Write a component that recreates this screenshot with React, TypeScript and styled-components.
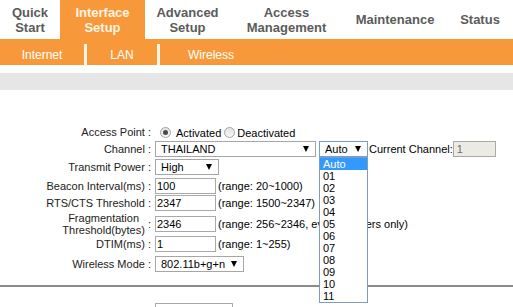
import React from "react";
import styled, { createGlobalStyle } from "styled-components";

const ORANGE = "#f7993b";

const GlobalStyle = createGlobalStyle`
  html, body { margin: 0; padding: 0; background: #fff; }
  body { font-family: "Liberation Sans", Arial, sans-serif; }
`;

const Page = styled.div`
  width: 513px;
  height: 307px;
  overflow: hidden;
  position: relative;
`;

const TopNav = styled.nav`
  display: flex;
  height: 39px;
`;

const Tab = styled.div<{ $w: number; $active?: boolean }>`
  flex: none;
  width: ${(p) => p.$w}px;
  display: flex;
  align-items: center;
  justify-content: center;
  text-align: center;
  font-size: 13px;
  line-height: 15px;
  font-weight: bold;
  color: ${(p) => (p.$active ? "#fff4e4" : "#5b5b5b")};
  background: ${(p) => (p.$active ? ORANGE : "transparent")};
`;

const SubNav = styled.div`
  display: flex;
  align-items: flex-end;
  height: 26px;
  background: ${ORANGE};
`;

const SubItem = styled.div<{ $w: number }>`
  flex: none;
  width: ${(p) => p.$w}px;
  height: 21px;
  display: flex;
  align-items: center;
  justify-content: center;
  color: #fff;
  font-size: 12px;
`;

const SubSep = styled.div`
  flex: none;
  width: 3px;
  height: 21px;
  background: #fff6e6;
`;

const GrayBar = styled.div`
  margin-top: 8px;
  height: 17px;
  background: #e6e6e6;
`;

const Form = styled.div`
  margin-top: 34px;
  font-size: 11px;
  color: #000;
`;

const Row = styled.div<{ $h: number }>`
  display: grid;
  grid-template-columns: 151px auto;
  column-gap: 4px;
  align-items: center;
  height: ${(p) => p.$h}px;
`;

const Label = styled.div`
  text-align: right;
  color: #222;
  white-space: nowrap;
`;

const MultiLabel = styled.div`
  display: flex;
  justify-content: flex-end;
  align-items: center;
  color: #222;
`;

const MultiText = styled.span`
  text-align: center;
  line-height: 12px;
`;

const Colon = styled.span`
  white-space: pre;
`;

const Field = styled.div`
  display: flex;
  align-items: center;
  white-space: nowrap;
`;

const Radio = styled.span<{ $checked?: boolean }>`
  flex: none;
  position: relative;
  width: 11px;
  height: 11px;
  box-sizing: border-box;
  border-radius: 50%;
  border: 1px solid #a2a2a2;
  background: linear-gradient(#e4e4e4, #f7f7f7);
  margin: 0 ${(p) => (p.$checked ? 5 : 2)}px 0 ${(p) => (p.$checked ? 5 : 3)}px;
  &::after {
    content: "";
    display: ${(p) => (p.$checked ? "block" : "none")};
    position: absolute;
    left: 2px;
    top: 2px;
    width: 5px;
    height: 5px;
    border-radius: 50%;
    background: #4a4a4a;
  }
`;

const RadioText = styled.span`
  padding-top: 2px;
`;

const Select = styled.div<{ $w: number; $focus?: boolean }>`
  flex: none;
  width: ${(p) => p.$w}px;
  height: 16px;
  box-sizing: border-box;
  border: 1px solid ${(p) => (p.$focus ? "#6f9fd6" : "#a6a6a6")};
  background: #fff;
  display: flex;
  align-items: center;
  padding: 0 6px 0 5px;
`;

const SelectValue = styled.span`
  flex: 1;
  line-height: 14px;
`;

const Arrow = styled.span`
  width: 0;
  height: 0;
  border-left: 3px solid transparent;
  border-right: 3px solid transparent;
  border-top: 6px solid #000;
`;

const TextBox = styled.div<{ $w: number; $disabled?: boolean }>`
  flex: none;
  width: ${(p) => p.$w}px;
  height: 16px;
  box-sizing: border-box;
  border: 1px solid #a9a9a9;
  background: ${(p) => (p.$disabled ? "#ebebe4" : "#fff")};
  color: ${(p) => (p.$disabled ? "#6d6d6d" : "#000")};
  padding-left: ${(p) => (p.$disabled ? 3 : 1)}px;
  line-height: 14px;
`;

const Hint = styled.span`
  margin-left: 2px;
`;

const ChannelWrap = styled.div`
  position: relative;
  margin-left: 3px;
`;

const DropList = styled.ul`
  position: absolute;
  z-index: 5;
  top: 16px;
  left: 0;
  width: 49px;
  box-sizing: border-box;
  margin: 0;
  padding: 0;
  list-style: none;
  border: 1px solid #7f9db9;
  background: #fff;
`;

const DropItem = styled.li<{ $sel?: boolean }>`
  height: 12px;
  line-height: 12px;
  padding-left: 3px;
  font-size: 11px;
  background: ${(p) => (p.$sel ? "#3399ff" : "#fff")};
  color: ${(p) => (p.$sel ? "#fff" : "#000")};
`;

const CurrentLabel = styled.span`
  margin-left: 1px;
  margin-right: 0px;
`;

const Divider = styled.div`
  margin-top: 11px;
  height: 2px;
  background: #8b8b8b;
`;

const BottomRow = styled.div`
  margin-top: 16px;
  padding-left: 155px;
`;

const BottomBox = styled.div`
  width: 78px;
  height: 20px;
  box-sizing: border-box;
  border: 1px solid #aaa;
  background: #fff;
`;

const tabs = [
  { w: 60, lines: ["Quick", "Start"] },
  { w: 85, lines: ["Interface", "Setup"], active: true },
  { w: 85, lines: ["Advanced", "Setup"] },
  { w: 113, lines: ["Access", "Management"] },
  { w: 104, lines: ["Maintenance"] },
  { w: 66, lines: ["Status"] },
];

const channels = ["Auto", "01", "02", "03", "04", "05", "06", "07", "08", "09", "10", "11"];

export default function App() {
  return (
    <Page>
      <GlobalStyle />
      <TopNav>
        {tabs.map((t) => (
          <Tab key={t.lines.join(" ")} $w={t.w} $active={t.active}>
            <span>
              {t.lines.map((l, i) => (
                <React.Fragment key={l}>
                  {i > 0 && <br />}
                  {l}
                </React.Fragment>
              ))}
            </span>
          </Tab>
        ))}
      </TopNav>
      <SubNav>
        <SubItem $w={84}>Internet</SubItem>
        <SubSep />
        <SubItem $w={70}>LAN</SubItem>
        <SubSep />
        <SubItem $w={102}>Wireless</SubItem>
      </SubNav>
      <GrayBar />
      <Form>
        <Row $h={16}>
          <Label>Access Point :</Label>
          <Field>
            <Radio $checked />
            <RadioText>Activated</RadioText>
            <Radio />
            <RadioText>Deactivated</RadioText>
          </Field>
        </Row>
        <Row $h={17}>
          <Label>Channel :</Label>
          <Field>
            <Select $w={161}>
              <SelectValue>THAILAND</SelectValue>
              <Arrow />
            </Select>
            <ChannelWrap>
              <Select $w={49} $focus>
                <SelectValue>Auto</SelectValue>
                <Arrow />
              </Select>
              <DropList>
                {channels.map((c, i) => (
                  <DropItem key={c} $sel={i === 0}>
                    {c}
                  </DropItem>
                ))}
              </DropList>
            </ChannelWrap>
            <CurrentLabel>Current Channel:</CurrentLabel>
            <TextBox $w={43} $disabled>
              1
            </TextBox>
          </Field>
        </Row>
        <Row $h={20}>
          <Label>Transmit Power :</Label>
          <Field>
            <Select $w={64}>
              <SelectValue>High</SelectValue>
              <Arrow />
            </Select>
          </Field>
        </Row>
        <Row $h={17}>
          <Label>Beacon Interval(ms) :</Label>
          <Field>
            <TextBox $w={61}>100</TextBox>
            <Hint>(range: 20~1000)</Hint>
          </Field>
        </Row>
        <Row $h={18}>
          <Label>RTS/CTS Threshold :</Label>
          <Field>
            <TextBox $w={61}>2347</TextBox>
            <Hint>(range: 1500~2347)</Hint>
          </Field>
        </Row>
        <Row $h={22}>
          <MultiLabel>
            <MultiText>
              Fragmentation
              <br />
              Threshold(bytes)
            </MultiText>
            <Colon> :</Colon>
          </MultiLabel>
          <Field>
            <TextBox $w={61}>2346</TextBox>
            <Hint>(range: 256~2346, even numbers only)</Hint>
          </Field>
        </Row>
        <Row $h={20}>
          <Label>DTIM(ms) :</Label>
          <Field>
            <TextBox $w={61}>1</TextBox>
            <Hint>(range: 1~255)</Hint>
          </Field>
        </Row>
        <Row $h={20}>
          <Label>Wireless Mode :</Label>
          <Field>
            <Select $w={89}>
              <SelectValue>802.11b+g+n</SelectValue>
              <Arrow />
            </Select>
          </Field>
        </Row>
      </Form>
      <Divider />
      <BottomRow>
        <BottomBox />
      </BottomRow>
    </Page>
  );
}
